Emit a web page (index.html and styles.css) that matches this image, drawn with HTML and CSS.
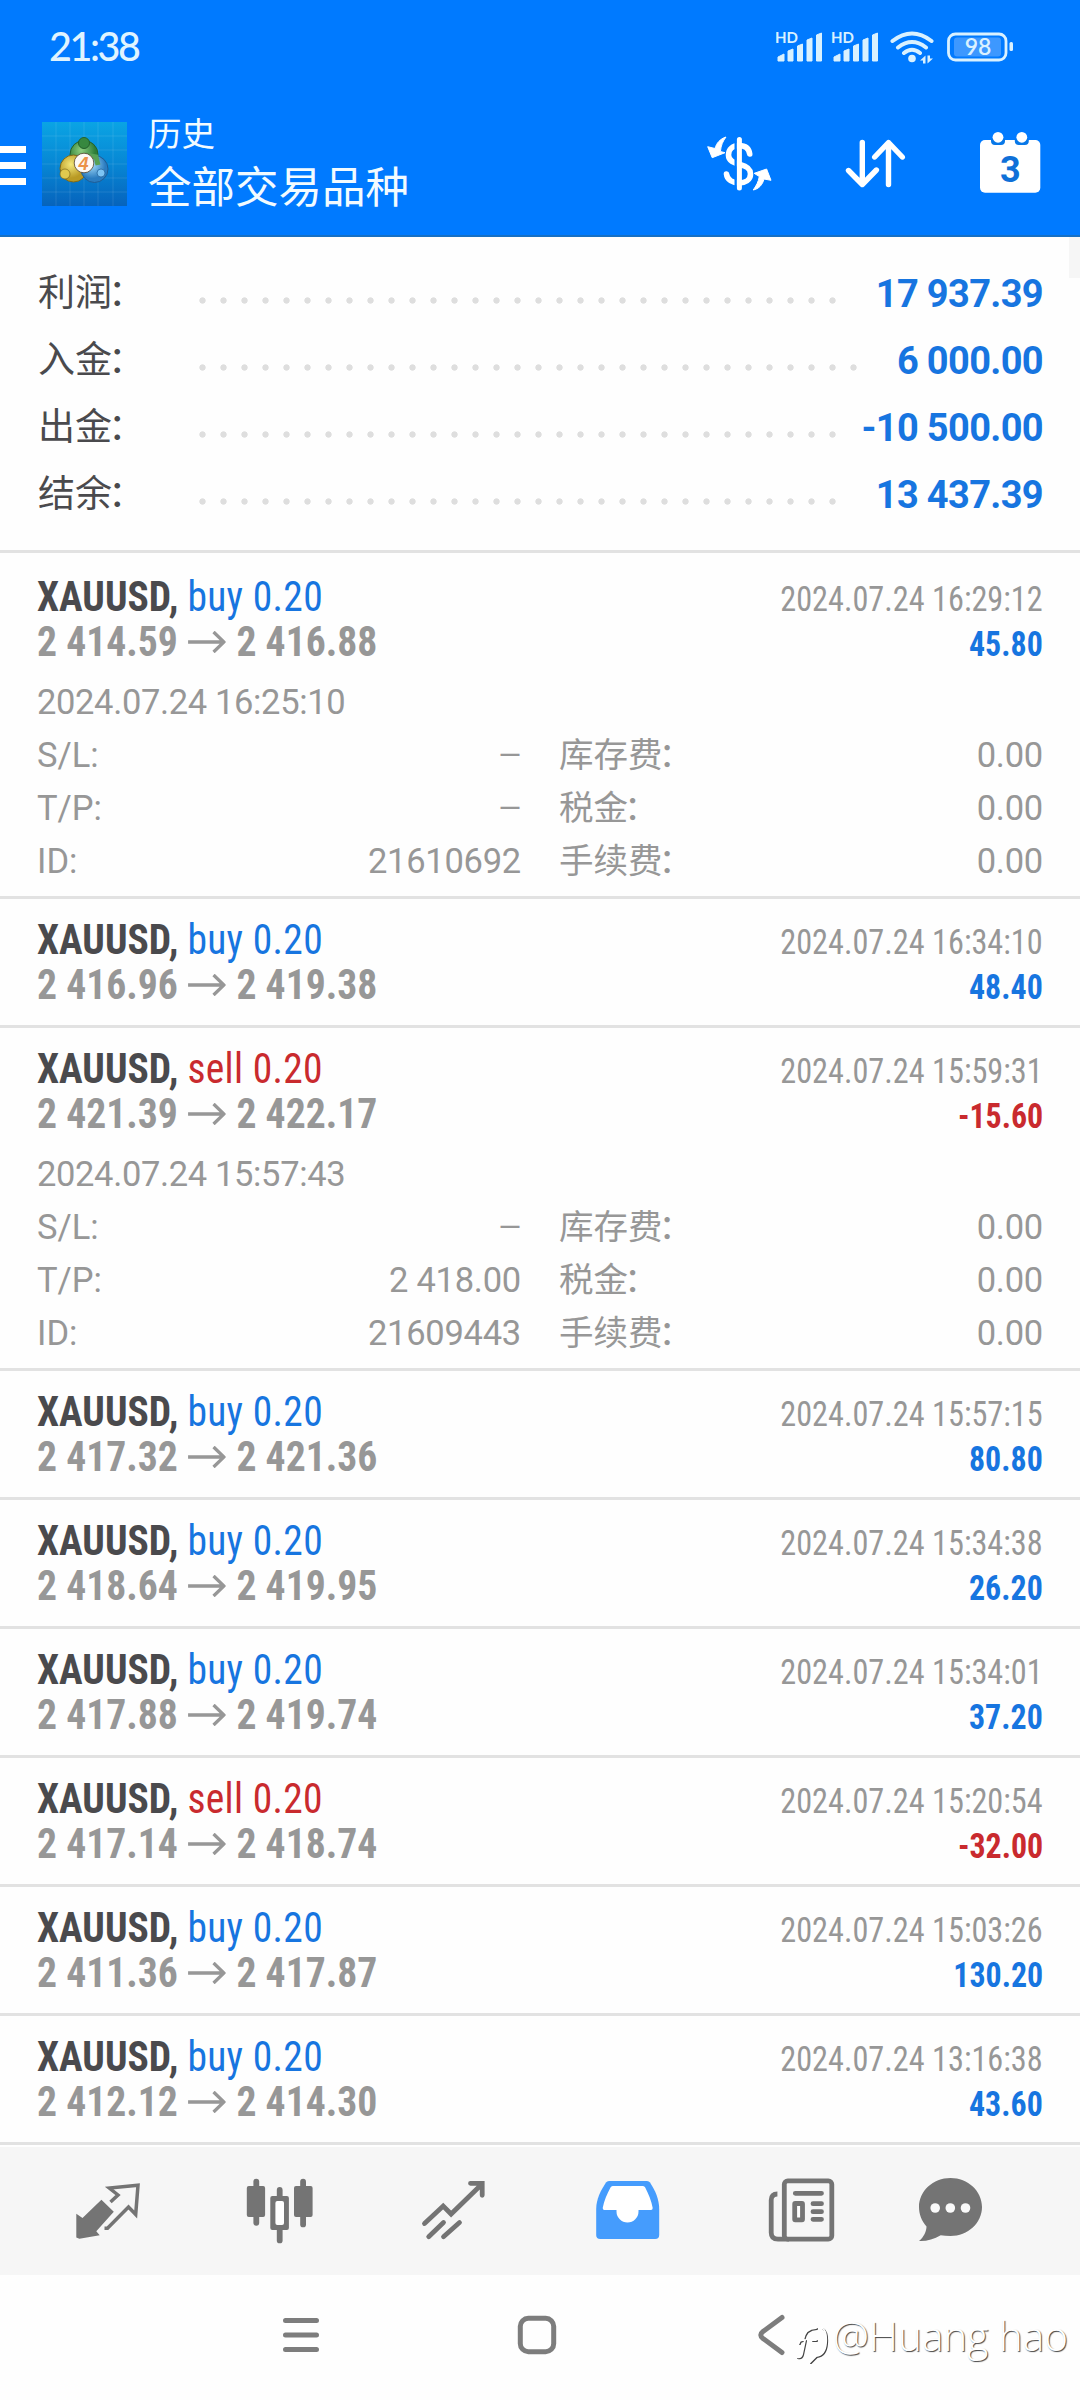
FILE: index.html
```html
<!DOCTYPE html>
<html lang="zh-CN">
<head>
<meta charset="utf-8">
<title>历史</title>
<link rel="stylesheet" href="styles.css">
</head>
<body>
<header class="top">
  <div class="status">
    <span class="clock">21:38</span>
    <svg class="status-icons" width="240" height="40" viewBox="776 26 240 40">
      <g fill="#d9f1ff">
        <text class="hd" x="775" y="43" textLength="23">HD</text>
        <path id="bars" d="M778 61v-4l6-3v7zM788 61V51l5-2v12zM797.500 61V46l5-2v17zM807 61V40l5-2v23zM816.500 61V35l5-2v28z" stroke="#d9f1ff" stroke-linejoin="round"/>
        <text class="hd" x="831" y="43" textLength="23">HD</text>
        <use href="#bars" x="56"/>
        <circle cx="912" cy="58.500" r="3.800"/>
        <path d="M925.500 55.500v8h-2.500v-3h-3zM927.500 63.500v-8h2.500v3h3z"/>
        <rect x="954" y="37.500" width="47" height="19" rx="3" fill="#3d98ff"/>
        <rect x="1009.500" y="42" width="3.500" height="9" rx="1.500"/>
        <text class="charge" x="978" y="55" text-anchor="middle">98</text>
      </g>
      <g fill="none" stroke="#d9f1ff" stroke-width="4" stroke-linecap="round">
        <path d="M892.500 41Q912 26 931.500 41M898 47.500Q912 36.500 926 47.500M904 53Q912 46.500 920 53"/>
        <rect x="948.500" y="34" width="57.500" height="26" rx="7" stroke-width="2.800"/>
      </g>
    </svg>
  </div>
  <div class="appbar">
    <div class="menu"><i></i><i></i><i></i></div>
    <svg class="logo" width="85" height="84" viewBox="0 0 85 84">
      <defs>
        <linearGradient id="sky" x1="0" y1="0" x2="0" y2="1"><stop offset="0" stop-color="#0aa4e4"/><stop offset=".5" stop-color="#0787d4"/><stop offset="1" stop-color="#0663bc"/></linearGradient>
        <radialGradient id="gr" cx=".4" cy=".35"><stop offset="0" stop-color="#8fcf80"/><stop offset="1" stop-color="#2c7d38"/></radialGradient>
        <radialGradient id="ye" cx=".4" cy=".35"><stop offset="0" stop-color="#f3e77a"/><stop offset="1" stop-color="#b99a24"/></radialGradient>
        <radialGradient id="bl" cx=".4" cy=".35"><stop offset="0" stop-color="#a4dcfa"/><stop offset="1" stop-color="#2b7cc0"/></radialGradient>
      </defs>
      <rect width="85" height="84" fill="url(#sky)"/>
      <path d="M14 0v84M28 0v84M42 0v84M56 0v84M71 0v84M0 14h85M0 28h85M0 42h85M0 56h85M0 70h85" stroke="#fff" stroke-opacity=".1"/>
      <circle cx="42" cy="32.500" r="14" fill="url(#gr)" stroke="#23612c"/>
      <circle cx="31.500" cy="46.500" r="13.500" fill="url(#ye)" stroke="#7c6a1c"/>
      <circle cx="52.500" cy="47" r="13.500" fill="url(#bl)" stroke="#1f5c94"/>
      <path d="M43 33l11 2 2 8" fill="none" stroke="#57a055" stroke-width="5"/>
      <circle cx="42" cy="21" r="5.500" fill="#37883f" stroke="#23612c"/>
      <circle cx="23" cy="52" r="5" fill="#e0c94e" stroke="#7c6a1c" stroke-width=".7"/>
      <circle cx="59" cy="51" r="4" fill="#7cc4f4" stroke="#1f5c94" stroke-width=".7"/>
      <circle cx="42" cy="41" r="9.800" fill="#fdf9f6" stroke="#54442f" stroke-width=".8"/>
      <text class="four" x="41.500" y="47.500" text-anchor="middle">4</text>
    </svg>
    <div class="titles"><div class="sub">历史</div><div class="main">全部交易品种</div></div>
    <div class="actions">
      <svg width="80" height="80" viewBox="0 0 80 80">
        <path d="M49.700 29C49 23 45 20.500 39 20.500S28.500 24 28.500 30 34 38 40 39.500 50.500 43 50.500 49 45 58 39 58 27 55 26.500 49" fill="none" stroke="#fff" stroke-width="5.600" stroke-linecap="round"/>
        <path d="M35.700 14v50" stroke="#007aff" stroke-width="2.400"/>
        <path d="M39.400 14.500v48.500" stroke="#fff" stroke-width="5" stroke-linecap="round"/>
        <path d="M26 12C20 14 16.500 18 15 23.500L7.700 21.700 12.200 32.700 25 27.700 20.400 26.500C21 20 23 16 26 12zM53.200 65C56 61 58.500 57 59.300 51.500L54.200 48.300 66.600 44 71 55.300 64 54C62.500 60 58.500 64 53.200 65z" fill="#fff" stroke="#fff" stroke-linejoin="round"/>
      </svg>
      <svg width="80" height="80" viewBox="0 0 80 80" fill="none" stroke="#fff" stroke-width="5.400" stroke-linecap="round" stroke-linejoin="round">
        <path d="M27.300 17.500V59M13.500 45.500 27.300 59.500 41.400 45M53.500 59.500V18M39.700 32 53.500 17.500 67.300 32"/>
      </svg>
      <svg width="80" height="80" viewBox="0 0 80 80">
        <rect x="10" y="15" width="60.300" height="52.700" rx="5" fill="#fff"/>
        <path d="M21 14v2q0 4 4 4h6q4 0 4-4v-2zM44.800 14v2q0 4 4 4h6q4 0 4-4v-2z" fill="#0878e8"/>
        <circle cx="28" cy="12.300" r="5.400" fill="#fff"/><circle cx="51.800" cy="12.300" r="5.400" fill="#fff"/>
        <text class="day" x="40.300" y="56.600" text-anchor="middle">3</text>
      </svg>
    </div>
  </div>
</header>

<main class="content">
  <i class="scrollbar"></i>
  <section class="summary">
    <div class="sum"><span>利润<em>：</em></span><i class="dots"></i><b>17 937.39</b></div>
    <div class="sum"><span>入金<em>：</em></span><i class="dots long"></i><b>6 000.00</b></div>
    <div class="sum"><span>出金<em>：</em></span><i class="dots"></i><b>-10 500.00</b></div>
    <div class="sum"><span>结余<em>：</em></span><i class="dots"></i><b>13 437.39</b></div>
  </section>

  <article class="trade first">
    <div class="line"><div class="sym"><b>XAUUSD,</b> <span class="buy">buy 0.20</span></div><time>2024.07.24 16:29:12</time></div>
    <div class="line"><div class="price">2 414.59<svg class="arrow" viewBox="0 0 40 22"><path d="M0 11h38M27 1l11 10-11 10"/></svg>2 416.88</div><b class="pl buy">45.80</b></div>
    <div class="details">
      <div class="opened">2024.07.24 16:25:10</div>
      <span>S/L:</span><span class="num dash">—</span><span class="cn">库存费<em>：</em></span><span class="num">0.00</span>
      <span>T/P:</span><span class="num dash">—</span><span class="cn">税金<em>：</em></span><span class="num">0.00</span>
      <span>ID:</span><span class="num">21610692</span><span class="cn">手续费<em>：</em></span><span class="num">0.00</span>
    </div>
  </article>
  <article class="trade">
    <div class="line"><div class="sym"><b>XAUUSD,</b> <span class="buy">buy 0.20</span></div><time>2024.07.24 16:34:10</time></div>
    <div class="line"><div class="price">2 416.96<svg class="arrow" viewBox="0 0 40 22"><path d="M0 11h38M27 1l11 10-11 10"/></svg>2 419.38</div><b class="pl buy">48.40</b></div>
  </article>
  <article class="trade">
    <div class="line"><div class="sym"><b>XAUUSD,</b> <span class="sell">sell 0.20</span></div><time>2024.07.24 15:59:31</time></div>
    <div class="line"><div class="price">2 421.39<svg class="arrow" viewBox="0 0 40 22"><path d="M0 11h38M27 1l11 10-11 10"/></svg>2 422.17</div><b class="pl sell">-15.60</b></div>
    <div class="details">
      <div class="opened">2024.07.24 15:57:43</div>
      <span>S/L:</span><span class="num dash">—</span><span class="cn">库存费<em>：</em></span><span class="num">0.00</span>
      <span>T/P:</span><span class="num">2 418.00</span><span class="cn">税金<em>：</em></span><span class="num">0.00</span>
      <span>ID:</span><span class="num">21609443</span><span class="cn">手续费<em>：</em></span><span class="num">0.00</span>
    </div>
  </article>
  <article class="trade">
    <div class="line"><div class="sym"><b>XAUUSD,</b> <span class="buy">buy 0.20</span></div><time>2024.07.24 15:57:15</time></div>
    <div class="line"><div class="price">2 417.32<svg class="arrow" viewBox="0 0 40 22"><path d="M0 11h38M27 1l11 10-11 10"/></svg>2 421.36</div><b class="pl buy">80.80</b></div>
  </article>
  <article class="trade">
    <div class="line"><div class="sym"><b>XAUUSD,</b> <span class="buy">buy 0.20</span></div><time>2024.07.24 15:34:38</time></div>
    <div class="line"><div class="price">2 418.64<svg class="arrow" viewBox="0 0 40 22"><path d="M0 11h38M27 1l11 10-11 10"/></svg>2 419.95</div><b class="pl buy">26.20</b></div>
  </article>
  <article class="trade">
    <div class="line"><div class="sym"><b>XAUUSD,</b> <span class="buy">buy 0.20</span></div><time>2024.07.24 15:34:01</time></div>
    <div class="line"><div class="price">2 417.88<svg class="arrow" viewBox="0 0 40 22"><path d="M0 11h38M27 1l11 10-11 10"/></svg>2 419.74</div><b class="pl buy">37.20</b></div>
  </article>
  <article class="trade">
    <div class="line"><div class="sym"><b>XAUUSD,</b> <span class="sell">sell 0.20</span></div><time>2024.07.24 15:20:54</time></div>
    <div class="line"><div class="price">2 417.14<svg class="arrow" viewBox="0 0 40 22"><path d="M0 11h38M27 1l11 10-11 10"/></svg>2 418.74</div><b class="pl sell">-32.00</b></div>
  </article>
  <article class="trade">
    <div class="line"><div class="sym"><b>XAUUSD,</b> <span class="buy">buy 0.20</span></div><time>2024.07.24 15:03:26</time></div>
    <div class="line"><div class="price">2 411.36<svg class="arrow" viewBox="0 0 40 22"><path d="M0 11h38M27 1l11 10-11 10"/></svg>2 417.87</div><b class="pl buy">130.20</b></div>
  </article>
  <article class="trade">
    <div class="line"><div class="sym"><b>XAUUSD,</b> <span class="buy">buy 0.20</span></div><time>2024.07.24 13:16:38</time></div>
    <div class="line"><div class="price">2 412.12<svg class="arrow" viewBox="0 0 40 22"><path d="M0 11h38M27 1l11 10-11 10"/></svg>2 414.30</div><b class="pl buy">43.60</b></div>
  </article>
</main>

<nav class="tabs">
  <svg viewBox="0 0 80 80">
    <path d="M9.300 42.700 15.500 47 34.400 28.700 46.800 40.700 29.300 60.300 32.700 64.300 12.400 67.700 9.300 66.500z" fill="#747474"/>
    <path d="M43.500 31 51 24 42.300 17 71 14.300 68.700 43.500 61.500 36 40.500 57.200H37.500" fill="none" stroke="#747474" stroke-width="3.500"/>
  </svg>
  <svg viewBox="0 0 80 80" fill="#747474">
    <rect x="13.400" y="7.700" width="5.800" height="47" rx="2.900"/><rect x="6.800" y="15" width="18.300" height="31" rx="2"/>
    <rect x="36.800" y="16" width="5.800" height="56.300" rx="2.900"/><rect x="30.300" y="25" width="18.600" height="34" rx="2"/><rect x="35.400" y="30" width="8.600" height="24" rx="2" fill="#fff"/>
    <rect x="60.200" y="7.700" width="5.800" height="48.600" rx="2.900"/><rect x="54" y="15" width="18.600" height="31" rx="2"/>
  </svg>
  <svg viewBox="0 0 80 80" fill="none" stroke="#747474" stroke-width="4.800">
    <path d="M10.500 52.500 29.200 35 37.100 43 68 13M56.500 12.300H68.200V24.300M14.700 65.700 29.500 51.500M29.500 65.700 45.500 51.500" stroke-linecap="round"/>
  </svg>
  <svg viewBox="0 0 80 80">
    <path d="M18 11.500Q19 10 21 10H59Q61 10 62 11.500C67 19 71.200 28 71.200 38V64Q71.200 68 67.200 68H12.200Q8.200 68 8.200 64V38C8.200 28 13 19 18 11.500z" fill="#459cfd"/>
    <path d="M24.700 15H55Q56.500 15 57.200 16.500C60.500 23 63.500 30 64.700 37Q64.700 39 63 39H50.500V40.500a11 11 0 0 1-22 0V39H16.400Q14.700 39 14.700 37C16 30 19 23 22.500 16.500Q23.200 15 24.700 15z" fill="#fff"/>
  </svg>
  <svg viewBox="0 0 80 80" fill="none" stroke="#747474" stroke-width="4.800">
    <path d="M16.400 23Q10.200 23 10.200 29V61.500Q10.200 68.200 17 68.200H28"/>
    <rect x="23.300" y="9.800" width="47.500" height="58.400" rx="3.500" fill="#f6f6f6"/>
    <rect x="33.700" y="32.500" width="7.800" height="16.300" rx=".5" fill="#fff"/>
    <path d="M34.300 22.300H60.500M52 32.700H60.500M52 40.700H60.500M52 48.300H60.500" stroke-linecap="round"/>
  </svg>
  <svg viewBox="0 0 80 80">
    <path d="M39.500 7C57 7 71 20 71 36S57 65 39.500 65Q34 65 29.700 64.200C23 68 15 70.500 8 70 13 66 15.500 60 15.500 55.500 10.500 50 8 43 8 36 8 20 22 7 39.500 7z" fill="#747474"/>
    <g fill="#fafafa"><circle cx="24.200" cy="37" r="4.800"/><circle cx="39.300" cy="37" r="4.800"/><circle cx="54.500" cy="37" r="4.800"/></g>
  </svg>
</nav>

<footer class="sysnav">
  <svg width="48" height="48" viewBox="0 0 48 48"><path d="M8.500 9.500h31M8.500 24h31M8.500 38.500h31"/></svg>
  <svg width="48" height="48" viewBox="0 0 48 48"><rect x="7.300" y="7.300" width="33.400" height="33.400" rx="8"/></svg>
  <svg width="48" height="48" viewBox="0 0 48 48"><path d="M33 6.500 14 20.500Q9.500 24 14 27.500L33 41.500"/></svg>
  <div class="mark">
    <svg width="34" height="40" viewBox="0 0 34 40"><path class="edge" d="M1 34Q5 35 6 31L9 17M3 20q0-3 4-3Q9 5 20 5M26 5Q31 8 30 20 29 32 20 33L14 39M16 17h4"/><path class="face" d="M0 33Q4 34 5 30L8 16M2 19q0-3 4-3Q8 4 19 4M25 4Q30 7 29 19 28 31 19 32L13 38M15 16h4"/></svg>
    <span>@Huang hao</span>
  </div>
</footer>
</body>
</html>
```

FILE: styles.css
```css
* { box-sizing: border-box; }
body { margin: 0; width: 1080px; height: 2400px; background: #fefefe; font-family: Roboto, "Noto Sans CJK SC", sans-serif; color: #4a4a4d; overflow: hidden; display: flex; flex-direction: column; }
svg { display: block; flex: none; }
em { font-style: normal; margin-left: -4px; }
.top { height: 237px; flex: none; background: #007aff; border-bottom: 2px solid #1770c4; color: #f2fbff; }
.status { height: 94px; padding: 26px 64px 0 49px; display: flex; justify-content: space-between; }
.clock { font: 500 39.500px/40px Lato, sans-serif; letter-spacing: -2.400px; color: #e0f4ff; }
.hd { font: 700 15px Lato, sans-serif; }
.charge { font: 600 23px Lato, sans-serif; }
.appbar { display: flex; height: 141px; padding-right: 30px; }
.menu { width: 26px; padding-top: 52px; display: flex; flex-direction: column; gap: 9px; }
.menu i { height: 7px; background: #fff; }
.logo { margin: 28px 21px 0 16px; }
.four { font: italic 700 18px "Liberation Sans", sans-serif; fill: #eb9248; }
.titles { padding-top: 17px; flex: 1; }
.sub { font-size: 33.500px; line-height: 48px; }
.main { font-size: 43.500px; line-height: 60px; }
.actions { display: flex; gap: 55px; padding-top: 31px; }
.day { font: 700 36px Roboto, sans-serif; fill: #0f70d8; }

.content { position: relative; flex: none; height: 1910px; }
.scrollbar { position: absolute; right: 0; top: 0; width: 11px; height: 41px; background: #f6f6f6; }
.summary { height: 316px; padding: 23px 37px 0 38px; border-bottom: 3px solid #e2e2e2; }
.sum { display: flex; height: 67px; line-height: 68px; }
.sum span { width: 161px; font-size: 37px; }
.sum b { margin-left: auto; font-size: 38px; letter-spacing: -.65px; color: #1775e0; }
.dots { width: 638px; height: 7px; margin-top: 37px; background: radial-gradient(circle at 3.500px 3.500px, #dedede 2.800px, transparent 3.500px) 0 0 / 21px 7px repeat-x; }
.dots.long { width: 659px; }

.trade { height: 129px; padding: 16px 37px 0; border-bottom: 3px solid #e2e2e2; font-family: "Roboto Condensed", Roboto, sans-serif; font-stretch: 75%; }
.trade:has(.details) { height: 343px; }
.trade.first { height: 346px; padding-top: 19px; }
.line { display: flex; justify-content: space-between; align-items: baseline; height: 45px; line-height: 50px; white-space: nowrap; }
.sym { font-size: 42px; transform: scaleX(.94); transform-origin: left; }
.sym span { letter-spacing: .35px; }
.price { font-size: 42px; font-weight: 700; color: #979797; display: flex; align-items: baseline; transform: scaleX(.944); transform-origin: left; }
.arrow { width: 40px; height: 22px; margin: 0 11px; align-self: center; fill: none; stroke: #979797; stroke-width: 3.500; }
time { font-size: 34.500px; color: #979797; transform: scaleX(.935); transform-origin: right; }
.pl { font-size: 34.500px; transform: scaleX(.925); transform-origin: right; }
.buy { color: #1775e0; }
.sell { color: #c92a2e; }
.details { display: grid; grid-template-columns: 150px 334px 200px 1fr; grid-auto-rows: 53px; line-height: 53px; font-family: Roboto, "Noto Sans CJK SC", sans-serif; font-stretch: 100%; font-size: 34.500px; color: #979797; padding-top: 14px; }
.opened { grid-column: 1 / -1; letter-spacing: -.35px; }
.num { text-align: right; letter-spacing: -.25px; }
.dash { font-size: 29px; }
.cn { padding-left: 38px; white-space: nowrap; }

.tabs { height: 128px; flex: none; background: #f6f6f6; padding-left: 20px; display: grid; grid-template-columns: repeat(5, 173.600px) 127px; place-items: center; }
.tabs svg { width: 80px; height: 80px; }
.sysnav { flex: 1; display: flex; padding: 36px 0 0 277px; fill: none; stroke: #7d7d7d; stroke-width: 5; stroke-linecap: round; stroke-linejoin: round; }
.sysnav > svg + svg { margin-left: 188px; }
.mark { display: flex; gap: 2px; font: 300 40.500px/50px "Open Sans", sans-serif; color: #fff; text-shadow: 1px 1px 1px #444; white-space: nowrap; }
.mark svg { margin-top: 13px; }
.edge { stroke: #444; stroke-width: 2; }
.face { stroke: #fff; stroke-width: 2; }
```
